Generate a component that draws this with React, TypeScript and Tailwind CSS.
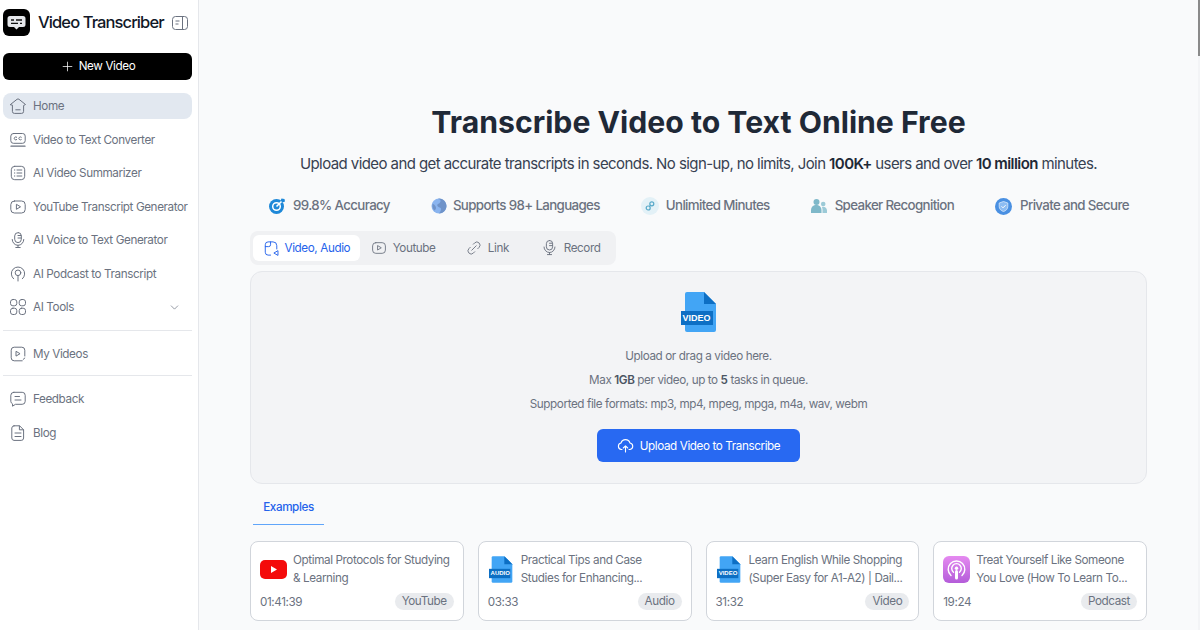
import { ReactNode } from 'react';
import { ChevronDown, Plus } from 'lucide-react';

const S = ({ children, size = 18, className = '' }: { children: ReactNode; size?: number; className?: string }) => (
  <svg
    width={size}
    height={size}
    viewBox="0 0 18 18"
    fill="none"
    stroke="currentColor"
    strokeWidth="1"
    strokeLinecap="round"
    strokeLinejoin="round"
    className={`shrink-0 ${className}`}
  >
    {children}
  </svg>
);

const HomeIcon = () => (
  <S>
    <path d="M1.500 7.500 8 2.300a1.600 1.600 0 0 1 2 0l6.500 5.200-1.900 1v5.900a2 2 0 0 1-2 2H5.400a2 2 0 0 1-2-2V8.500Z" />
    <path d="M6.800 12.800h4.400" />
  </S>
);
const CcIcon = () => (
  <S>
    <rect x="1.800" y="2.500" width="14.400" height="9.800" rx="2.600" />
    <path d="M7.700 6.200a1.500 1.500 0 1 0 0 2.400M12.300 6.200a1.500 1.500 0 1 0 0 2.400" />
    <path d="M2 15.200h14" strokeWidth="1.300" />
  </S>
);
const ListIcon = () => (
  <S>
    <rect x="2.300" y="2.300" width="13.400" height="13.400" rx="3.400" />
    <path d="M5.400 6h.4M5.400 9h.4M5.400 12h.4M8 6h4.800M8 9h4.800M8 12h4.800" />
  </S>
);
const PlayRectIcon = ({ size = 18 }: { size?: number }) => (
  <S size={size}>
    <rect x="1.800" y="3" width="14.400" height="12" rx="3.600" />
    <path d="M7.400 6.700v4.600l3.800-2.300Z" />
  </S>
);
const MicIcon = ({ size = 18 }: { size?: number }) => (
  <S size={size}>
    <rect x="5.700" y="1.600" width="6.600" height="10" rx="3.300" />
    <path d="M9 4.500h3M9 7h3" />
    <path d="M3.200 8.500a5.800 5.800 0 0 0 11.600 0M9 14.300v2.200M6.800 16.500h4.400" />
  </S>
);
const PodcastIcon = () => (
  <S>
    <path d="M4.600 13.800a6.700 6.700 0 1 1 8.800 0" />
    <circle cx="9" cy="7.800" r="2.800" />
    <path d="M9 10.600v5.400" />
  </S>
);
const ToolsIcon = () => (
  <S>
    <rect x="1.500" y="1.500" width="6.300" height="6.300" rx="2.400" />
    <rect x="10.200" y="1.500" width="6.300" height="6.300" rx="2.400" />
    <rect x="1.500" y="10.200" width="6.300" height="6.300" rx="2.400" />
    <rect x="10.200" y="10.200" width="6.300" height="6.300" rx="2.400" />
  </S>
);
const MyVideosIcon = () => (
  <S>
    <path d="M15.800 11V5.200a3 3 0 0 0-3-3H5.200a3 3 0 0 0-3 3v7.600a3 3 0 0 0 3 3h8" />
    <path d="M7 6.700v4.400l3.700-2.200Z" />
    <path d="m15.800 13-1.600 1.400" />
  </S>
);
const FeedbackIcon = () => (
  <S>
    <path d="M4.800 2.300h8.400a3 3 0 0 1 3 3v6a3 3 0 0 1-3 3H6.500l-3 1.900.1-2.300a3 3 0 0 1-1.800-2.600v-6a3 3 0 0 1 3-3Z" />
    <path d="M6 6.500h4.500M6 10h6" />
  </S>
);
const BlogIcon = () => (
  <S>
    <path d="M5 1.800h5.600l4 4v8.200a2.400 2.400 0 0 1-2.400 2.400H5A2.400 2.400 0 0 1 2.800 14V4A2.300 2.300 0 0 1 5 1.800Z" />
    <path d="M10.400 2v3.800h4M6 9h6M6 12.500h6" />
  </S>
);
const LinkIcon = ({ size = 18 }: { size?: number }) => (
  <S size={size}>
    <path d="M6.500 11.500 11.500 6.500" />
    <path d="m8.200 4.800 1.500-1.500a3.500 3.500 0 0 1 5 5l-1.500 1.500" />
    <path d="m9.800 13.200-1.500 1.500a3.500 3.500 0 0 1-5-5l1.500-1.500" />
  </S>
);
const UploadTabIcon = () => (
  <S size={17}>
    <path d="M8 16H5.400a3 3 0 0 1-3-3V5a3 3 0 0 1 3-3h5.200a4 4 0 0 1 4 4v3.500" />
    <path d="M8 2v3a2 2 0 0 1-2 2H2.500" />
    <path d="m15.500 11.500-4 2.300 4 2.300Z" />
  </S>
);

function FileBadge({ label, w, h, small }: { label: string; w: number; h: number; small?: boolean }) {
  return (
    <div className="relative shrink-0" style={{ width: w, height: h }}>
      <svg width={w} height={h} viewBox="0 0 36 40" className="block">
        <path d="M6 0h17l12 12v26a2 2 0 0 1-2 2H6a2 2 0 0 1-2-2V2a2 2 0 0 1 2-2Z" fill="#42a5f5" />
        <path d="M23 0 35 12H23Z" fill="#0d6fc4" />
        <rect x="0" y="19" width="32" height="14" fill="#0d6fc4" />
      </svg>
      <span
        className={`absolute left-0 text-white font-bold text-center leading-none tracking-normal font-['Liberation_Sans',sans-serif] ${small ? 'text-[6px] top-[14.500px] w-[22px]' : 'text-[9px] top-[21.500px] w-[32px]'}`}
      >
        {label}
      </span>
    </div>
  );
}

const YoutubeLogo = () => (
  <svg width="27" height="19" viewBox="0 0 27 19" className="shrink-0">
    <rect width="27" height="19" rx="5" fill="#f40b0b" />
    <path d="M11 6v7l6-3.500Z" fill="#fff" />
  </svg>
);

const PodcastLogo = () => (
  <div className="w-[27px] h-[27px] rounded-[6px] bg-gradient-to-b from-[#e58af0] to-[#b45cd9] shrink-0 flex items-center justify-center">
    <svg width="21" height="21" viewBox="0 0 21 21" fill="none" stroke="#fff" strokeWidth="1.400" strokeLinecap="round">
      <path d="M5 16.500a8.300 8.300 0 1 1 11 0" />
      <path d="M7.500 13.200a4.800 4.800 0 1 1 6 0" />
      <circle cx="10.500" cy="9.200" r="1.700" fill="#fff" stroke="none" />
      <path d="M10.500 12.500v6.500" strokeWidth="3" />
    </svg>
  </div>
);

const nav = [
  { label: 'Video to Text Converter', icon: <CcIcon /> },
  { label: 'AI Video Summarizer', icon: <ListIcon /> },
  { label: 'YouTube Transcript Generator', icon: <PlayRectIcon /> },
  { label: 'AI Voice to Text Generator', icon: <MicIcon /> },
  { label: 'AI Podcast to Transcript', icon: <PodcastIcon /> },
];

function NavRow({ label, icon, active, extra }: { label: string; icon: ReactNode; active?: boolean; extra?: ReactNode }) {
  return (
    <div className={`h-[26px] rounded-lg flex items-center pl-[6px] pr-[11px] gap-[6px] text-[#6b7280] ${active ? 'bg-[#e2e8f0]' : ''}`}>
      <span className="w-[18px] flex justify-center text-[#6b7280]">{icon}</span>
      <span className="whitespace-nowrap pt-[2px]">{label}</span>
      {extra}
    </div>
  );
}

const features = [
  {
    label: '99.8% Accuracy',
    w: 'w-[19px]',
    icon: (
      <svg width="18" height="18" viewBox="0 0 18 18" fill="none">
        <circle cx="8.500" cy="9.500" r="7.500" fill="#1e88d8" />
        <circle cx="8.500" cy="9.500" r="3.800" stroke="#fff" strokeWidth="1.500" />
        <path d="M8.500 9.500 15 3" stroke="#fff" strokeWidth="1.600" />
        <path d="m13.500 1.500 3 .5.500 2.500-2.500 1-2-2Z" fill="#1e88d8" />
      </svg>
    ),
  },
  {
    label: 'Supports 98+ Languages',
    w: 'w-[16px]',
    icon: (
      <svg width="16" height="16" viewBox="0 0 16 16">
        <circle cx="8" cy="8" r="7.500" fill="#8ab4ef" />
        <path d="M7 1c3 .5 3 2 2 3.500S5.500 6 6.500 8 10 9 10 11s-1.500 4-2 4.500C12 15.500 15.500 12 15.500 8S12 .5 8 .5Z" fill="#6f93c9" />
        <path d="M1.500 6C3 6 5 8 5 10s-1.500 2-2 2.500A7.500 7.500 0 0 1 1.500 6Z" fill="#6f93c9" />
      </svg>
    ),
  },
  {
    label: 'Unlimited Minutes',
    w: 'w-[19px]',
    icon: (
      <svg width="18" height="18" viewBox="0 0 18 18" fill="none">
        <circle cx="9" cy="9" r="9" fill="#e3f1f7" />
        <circle cx="10.800" cy="6.800" r="2" stroke="#58a9c9" strokeWidth="1.200" />
        <circle cx="7.200" cy="11" r="2" stroke="#58a9c9" strokeWidth="1.200" />
        <path d="M9.500 8.300 8.400 9.600" stroke="#58a9c9" strokeWidth="1.200" />
      </svg>
    ),
  },
  {
    label: 'Speaker Recognition',
    w: 'w-[18px]',
    icon: (
      <svg width="16" height="14" viewBox="0 0 16 14">
        <circle cx="5.500" cy="3" r="3" fill="#7fb8c9" />
        <path d="M0 14v-3a5 5 0 0 1 10.500 0v3Z" fill="#7fb8c9" />
        <circle cx="12.200" cy="5" r="2.300" fill="#9ccad7" />
        <path d="M11.500 14v-3.500c0-1 -.2-1.800-.6-2.500 2.600-.6 5.100 1 5.100 3.500V14Z" fill="#9ccad7" />
      </svg>
    ),
  },
  {
    label: 'Private and Secure',
    w: 'w-[19px]',
    icon: (
      <svg width="17" height="17" viewBox="0 0 17 17" fill="none">
        <circle cx="8.500" cy="8.500" r="8.500" fill="#4a90e2" />
        <path d="M8.500 3.500 12.800 5v3.500c0 2.700-2 4.300-4.300 5-2.300-.7-4.300-2.300-4.300-5V5Z" fill="#8dbcf2" stroke="#d7e8fb" strokeWidth=".8" />
        <path d="m6.500 8.300 1.500 1.500 2.600-2.600" stroke="#fff" strokeWidth="1" />
      </svg>
    ),
  },
];

const tabs = [
  { label: 'Youtube', icon: <PlayRectIcon size={16} />, w: 'w-[87px]' },
  { label: 'Link', icon: <LinkIcon size={16} />, w: 'w-[82px]' },
  { label: 'Record', icon: <MicIcon size={17} />, w: 'w-[85px]' },
];

const examples = [
  { title: 'Optimal Protocols for Studying', sub: '& Learning', time: '01:41:39', tag: 'YouTube', art: <YoutubeLogo /> },
  { title: 'Practical Tips and Case', sub: 'Studies for Enhancing...', time: '03:33', tag: 'Audio', art: <FileBadge label="AUDIO" w={24} h={27} small /> },
  { title: 'Learn English While Shopping', sub: '(Super Easy for A1-A2) | Dail...', time: '31:32', tag: 'Video', art: <FileBadge label="VIDEO" w={24} h={27} small /> },
  { title: 'Treat Yourself Like Someone', sub: 'You Love (How To Learn To...', time: '19:24', tag: 'Podcast', art: <PodcastLogo /> },
];

export default function App() {
  return (
    <div className="h-screen flex overflow-hidden bg-[#f9fafb] font-['Inter',sans-serif] text-[11.700px] tracking-[-0.4px]">
      <aside className="w-[199px] shrink-0 bg-white border-r border-[#e5e7eb] pl-[3px] pr-[6px] pt-[9px]">
        <div className="flex items-center h-[27px]">
          <div className="w-[27px] h-[27px] rounded-[6px] bg-black flex items-center justify-center shrink-0">
            <svg width="19" height="16" viewBox="0 0 19 16">
              <path d="M3 1h13a2.500 2.500 0 0 1 2.500 2.500v6A2.500 2.500 0 0 1 16 12h-4l-2.500 2.500L7 12H3A2.500 2.500 0 0 1 .5 9.500v-6A2.500 2.500 0 0 1 3 1Z" fill="#e5e7eb" />
              <path d="M4 5h3M9 5h6M4 8.300h7M13 8.300h2" stroke="#111" strokeWidth="1.300" />
            </svg>
          </div>
          <span className="ml-[8px] text-[16.500px] tracking-[-0.9px] font-medium text-[#111827] whitespace-nowrap">Video Transcriber</span>
          <svg width="16" height="14" viewBox="0 0 16 14" fill="none" stroke="#6b7280" strokeWidth="1" className="ml-[8px] shrink-0">
            <rect x=".5" y=".5" width="15" height="13" rx="3" />
            <path d="M10.500 .5v13M3.500 5h4M3.500 8h3" />
          </svg>
        </div>
        <div className="mt-[17px] h-[27px] rounded-md bg-black text-white flex items-center justify-center gap-[4px]">
          <Plus size={15} strokeWidth={1.2} />
          <span className="pt-px">New Video</span>
        </div>
        <div className="mt-[13px] flex flex-col gap-[7.500px]">
          <NavRow label="Home" icon={<HomeIcon />} active />
          {nav.map((n) => (
            <NavRow key={n.label} label={n.label} icon={n.icon} />
          ))}
          <NavRow
            label="AI Tools"
            icon={<ToolsIcon />}
            extra={<ChevronDown size={13} strokeWidth={1.300} className="ml-auto" />}
          />
        </div>
        <div className="border-t border-[#e5e7eb] mt-[10px] pt-[10px] pb-[8px]">
          <NavRow label="My Videos" icon={<MyVideosIcon />} />
        </div>
        <div className="border-t border-[#e5e7eb] pt-[10px] flex flex-col gap-[7.500px]">
          <NavRow label="Feedback" icon={<FeedbackIcon />} />
          <NavRow label="Blog" icon={<BlogIcon />} />
        </div>
      </aside>

      <main className="flex-1 min-w-0">
        <div className="w-[897px] mx-auto pt-[102px]">
          <h1 className="text-[30.200px] leading-[40px] tracking-normal font-bold text-center text-[#1f2937]">Transcribe Video to Text Online Free</h1>
          <p className="mt-[10px] text-[15px] tracking-[-0.58px] leading-[24px] text-center text-[#374151] whitespace-nowrap">
            Upload video and get accurate transcripts in seconds. No sign-up, no limits, Join <b className="font-semibold text-[#1f2937]">100K+</b> users and over <b className="font-semibold text-[#1f2937]">10 million</b> minutes.
          </p>
          <div className="mt-[18px] flex justify-center gap-[41px] h-[24px] items-center">
            {features.map((f) => (
              <div key={f.label} className="flex items-center gap-[6px] text-[13.300px] tracking-[-0.63px] font-medium text-[#6b7280] whitespace-nowrap">
                <span className={`${f.w} flex justify-start`}>{f.icon}</span>
                {f.label}
              </div>
            ))}
          </div>
          <div className="mt-[13px] w-[366px] h-[34px] rounded-lg bg-[#f0f1f3] p-[3px] flex items-center text-[#6b7280]">
            <div className="w-[107px] h-[26px] rounded-md bg-white text-[#2563eb] flex items-center justify-center gap-[5px]">
              <UploadTabIcon />
              <span className="pt-[2px]">Video, Audio</span>
            </div>
            {tabs.map((t) => (
              <div key={t.label} className={`${t.w} flex items-center justify-center gap-[6px]`}>
                {t.icon}
                <span className="pt-[2px]">{t.label}</span>
              </div>
            ))}
          </div>
          <div className="mt-[6px] h-[213px] rounded-xl border border-[#e5e7eb] bg-[#f3f4f6] flex flex-col items-center pt-[20px] text-[#6b7280]">
            <FileBadge label="VIDEO" w={36} h={40} />
            <p className="mt-[12px] leading-[24px]">Upload or drag a video here.</p>
            <p className="leading-[24px]">Max <b className="font-semibold text-[#4b5563]">1GB</b> per video, up to <b className="font-semibold text-[#4b5563]">5</b> tasks in queue.</p>
            <p className="leading-[24px]">Supported file formats: mp3, mp4, mpeg, mpga, m4a, wav, webm</p>
            <div className="mt-[13px] w-[203px] h-[33px] rounded-md bg-[#2869f2] text-white flex items-center justify-center gap-[6px]">
              <svg width="17" height="15" viewBox="0 0 17 15" fill="none" stroke="#fff" strokeWidth="1.100" strokeLinecap="round" strokeLinejoin="round">
                <path d="M5 11.500H4.300A3.300 3.300 0 0 1 4 5 4.700 4.700 0 0 1 13 5a3.300 3.300 0 0 1 0 6.500h-1" />
                <path d="M8.500 14V8M6.300 10l2.200-2.200 2.200 2.200" />
              </svg>
              <span className="pt-[2px]">Upload Video to Transcribe</span>
            </div>
          </div>
          <div className="mt-[12px] w-[71px] ml-[3px] h-[29px] border-b border-[#60a5fa] font-medium text-[#2563eb] text-center leading-[22px]">Examples</div>
          <div className="mt-[16px] grid grid-cols-4 gap-[14px]">
            {examples.map((e) => (
              <div key={e.title} className="h-[80px] rounded-lg border border-[#d1d5db] bg-white px-[9px] pt-[9px]">
                <div className="flex items-center gap-[6px] h-[36px]">
                  <span className="w-[27px] flex justify-center">{e.art}</span>
                  <div className="leading-[18px] text-[#6b7280] whitespace-nowrap">
                    <div>{e.title}</div>
                    <div>{e.sub}</div>
                  </div>
                </div>
                <div className="mt-[5px] flex items-center justify-between text-[#6b7280]">
                  <span className="pt-[2px]">{e.time}</span>
                  <span className="h-[17px] px-[7px] rounded-full bg-[#e9ebee] leading-[17px]">{e.tag}</span>
                </div>
              </div>
            ))}
          </div>
        </div>
      </main>
      <div className="w-[2px] shrink-0 bg-[#f3f4f6]">
        <div className="h-[56px] bg-[#8a8a8a]" />
      </div>
    </div>
  );
}
